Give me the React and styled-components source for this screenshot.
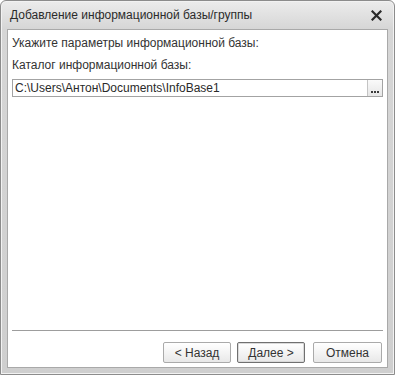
import React from "react";
import styled, { createGlobalStyle } from "styled-components";

const GlobalStyle = createGlobalStyle`
  html, body {
    margin: 0;
    padding: 0;
    background: #ffffff;
  }
  body {
    font-family: "Liberation Sans", Arial, sans-serif;
    font-size: 12px;
    color: #333333;
  }
`;

const Window = styled.div`
  width: 395px;
  height: 375px;
  box-sizing: border-box;
  border: 1px solid #8c8c8c;
  border-radius: 6px 6px 0 0;
  background: linear-gradient(to bottom, #ececec 0px, #d6d6d6 28px, #cfcfcf 100%);
  box-shadow: inset 0 0 0 1px #f2f2f2;
  display: flex;
  flex-direction: column;
  padding: 0 6px 6px 6px;
`;

const TitleBar = styled.div`
  height: 28px;
  display: flex;
  align-items: center;
  justify-content: space-between;
  padding: 0 6px 0 3px;
`;

const Title = styled.span`
  font-size: 12px;
  color: #2b2b2b;
`;

const Close = styled.svg`
  width: 11px;
  height: 11px;
  margin-top: 1px;
`;

const Panel = styled.div`
  flex: 1;
  background: #ffffff;
  border: 1px solid #a9a9a9;
  display: flex;
  flex-direction: column;
  padding: 6px 4px 4px 4px;
`;

const Label = styled.div`
  font-size: 12px;
  line-height: 14px;
  color: #333333;
  margin-bottom: ${(p) => p.gap || 0}px;
`;

const Field = styled.div`
  display: flex;
  border: 1px solid #a3a3a3;
  box-sizing: border-box;
  height: 18px;
`;

const FieldText = styled.div`
  flex: 1;
  padding-left: 2px;
  font-size: 12px;
  line-height: 16px;
  color: #2a2a2a;
`;

const DotsButton = styled.div`
  width: 15px;
  border-left: 1px solid #c4c4c4;
  background: linear-gradient(to bottom, #fafafa, #e6e6e6);
  display: flex;
  align-items: flex-end;
  justify-content: center;
  gap: 1px;
  padding-bottom: 3px;
  box-sizing: border-box;
`;

const Dot = styled.span`
  width: 2px;
  height: 2px;
  background: #3a3a3a;
`;

const Spacer = styled.div`
  flex: 1;
`;

const Separator = styled.div`
  height: 1px;
  background: #9d9d9d;
  margin: 0 0 11px 0;
`;

const ButtonRow = styled.div`
  display: flex;
  justify-content: flex-end;
  gap: 6px;
  padding-right: 1px;
`;

const Button = styled.div`
  width: ${(p) => p.w || 68}px;
  height: 21px;
  box-sizing: border-box;
  border: 1px solid ${(p) => (p.primary ? "#707070" : "#aaaaaa")};
  border-radius: 2px;
  background: linear-gradient(to bottom, #ffffff 0%, #f4f4f4 50%, #e8e8e8 100%);
  box-shadow: ${(p) => (p.primary ? "inset 0 0 0 1px #dadada" : "none")};
  display: flex;
  align-items: center;
  justify-content: center;
  font-size: 12px;
  color: #333333;
  margin-left: ${(p) => p.ml || 0}px;
`;

export default function App() {
  return (
    <>
      <GlobalStyle />
      <Window>
        <TitleBar>
          <Title>Добавление информационной базы/группы</Title>
          <Close viewBox="0 0 11 11">
            <path d="M1.5 1.5 L9.5 9.5 M9.5 1.5 L1.5 9.5" stroke="#2a2a2a" strokeWidth="2.2" strokeLinecap="square" />
          </Close>
        </TitleBar>
        <Panel>
          <Label gap={8}>Укажите параметры информационной базы:</Label>
          <Label gap={7}>Каталог информационной базы:</Label>
          <Field>
            <FieldText>C:\Users\Антон\Documents\InfoBase1</FieldText>
            <DotsButton>
              <Dot />
              <Dot />
              <Dot />
            </DotsButton>
          </Field>
          <Spacer />
          <Separator />
          <ButtonRow>
            <Button>&lt; Назад</Button>
            <Button primary>Далее &gt;</Button>
            <Button w={69} ml={2}>Отмена</Button>
          </ButtonRow>
        </Panel>
      </Window>
    </>
  );
}
